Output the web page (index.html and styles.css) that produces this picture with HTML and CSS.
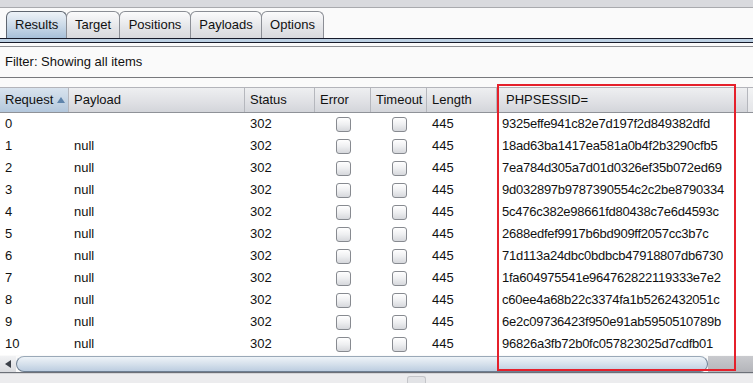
FILE: index.html
```html
<!DOCTYPE html>
<html>
<head>
<meta charset="utf-8">
<link rel="stylesheet" href="styles.css">
</head>
<body>
<div class="app">
  <div class="topbar"></div>
  <div class="tabs">
    <div class="tab tab-active">Results</div>
    <div class="tab">Target</div>
    <div class="tab">Positions</div>
    <div class="tab">Payloads</div>
    <div class="tab">Options</div>
  </div>
  <div class="tabline"></div>
  <div class="filter">Filter: Showing all items</div>
  <div class="table">
    <div class="thead">
      <div class="th th-sorted">Request<span class="sort"></span></div>
      <div class="th">Payload</div>
      <div class="th">Status</div>
      <div class="th">Error</div>
      <div class="th">Timeout</div>
      <div class="th">Length</div>
      <div class="th th-sess">PHPSESSID=</div>
      <div class="th th-last"></div>
    </div>
    <div class="tbody">
      <div class="tr"><div class="td">0</div><div class="td"></div><div class="td">302</div><div class="td tc"><span class="cb"></span></div><div class="td tc"><span class="cb"></span></div><div class="td">445</div><div class="td sess">9325effe941c82e7d197f2d849382dfd</div><div class="td"></div></div>
      <div class="tr"><div class="td">1</div><div class="td">null</div><div class="td">302</div><div class="td tc"><span class="cb"></span></div><div class="td tc"><span class="cb"></span></div><div class="td">445</div><div class="td sess">18ad63ba1417ea581a0b4f2b3290cfb5</div><div class="td"></div></div>
      <div class="tr"><div class="td">2</div><div class="td">null</div><div class="td">302</div><div class="td tc"><span class="cb"></span></div><div class="td tc"><span class="cb"></span></div><div class="td">445</div><div class="td sess">7ea784d305a7d01d0326ef35b072ed69</div><div class="td"></div></div>
      <div class="tr"><div class="td">3</div><div class="td">null</div><div class="td">302</div><div class="td tc"><span class="cb"></span></div><div class="td tc"><span class="cb"></span></div><div class="td">445</div><div class="td sess">9d032897b9787390554c2c2be8790334</div><div class="td"></div></div>
      <div class="tr"><div class="td">4</div><div class="td">null</div><div class="td">302</div><div class="td tc"><span class="cb"></span></div><div class="td tc"><span class="cb"></span></div><div class="td">445</div><div class="td sess">5c476c382e98661fd80438c7e6d4593c</div><div class="td"></div></div>
      <div class="tr"><div class="td">5</div><div class="td">null</div><div class="td">302</div><div class="td tc"><span class="cb"></span></div><div class="td tc"><span class="cb"></span></div><div class="td">445</div><div class="td sess">2688edfef9917b6bd909ff2057cc3b7c</div><div class="td"></div></div>
      <div class="tr"><div class="td">6</div><div class="td">null</div><div class="td">302</div><div class="td tc"><span class="cb"></span></div><div class="td tc"><span class="cb"></span></div><div class="td">445</div><div class="td sess">71d113a24dbc0bdbcb47918807db6730</div><div class="td"></div></div>
      <div class="tr"><div class="td">7</div><div class="td">null</div><div class="td">302</div><div class="td tc"><span class="cb"></span></div><div class="td tc"><span class="cb"></span></div><div class="td">445</div><div class="td sess">1fa604975541e964762822119333e7e2</div><div class="td"></div></div>
      <div class="tr"><div class="td">8</div><div class="td">null</div><div class="td">302</div><div class="td tc"><span class="cb"></span></div><div class="td tc"><span class="cb"></span></div><div class="td">445</div><div class="td sess">c60ee4a68b22c3374fa1b5262432051c</div><div class="td"></div></div>
      <div class="tr"><div class="td">9</div><div class="td">null</div><div class="td">302</div><div class="td tc"><span class="cb"></span></div><div class="td tc"><span class="cb"></span></div><div class="td">445</div><div class="td sess">6e2c09736423f950e91ab5950510789b</div><div class="td"></div></div>
      <div class="tr"><div class="td">10</div><div class="td">null</div><div class="td">302</div><div class="td tc"><span class="cb"></span></div><div class="td tc"><span class="cb"></span></div><div class="td">445</div><div class="td sess">96826a3fb72b0fc057823025d7cdfb01</div><div class="td"></div></div>
    </div>
    <div class="hscroll">
      <div class="sbtn"><span class="arrow"></span></div>
      <div class="thumb"></div>
      <div class="track"></div>
    </div>
    <div class="highlight"></div>
  </div>
  <div class="bottom"><span class="nub"></span></div>
</div>
</body>
</html>
```
FILE: styles.css
```css
html, body {
  margin: 0;
  padding: 0;
}
body {
  width: 753px;
  height: 383px;
  overflow: hidden;
  background: #fafafa;
  font-family: "Liberation Sans", Arial, sans-serif;
  font-size: 13px;
  color: #111;
}
.app {
  display: flex;
  flex-direction: column;
  height: 383px;
}
.topbar {
  height: 7px;
  background: #d9dade;
  border-bottom: 1px solid #a9aaae;
}
.tabs {
  display: flex;
  align-items: flex-end;
  height: 30px;
  padding-left: 6px;
  box-sizing: border-box;
}
.tab {
  height: 27px;
  box-sizing: border-box;
  padding: 0 8px;
  line-height: 25px;
  border: 1px solid #8b8e95;
  border-bottom: none;
  border-radius: 6px 6px 0 0;
  background: linear-gradient(#fbfbfc, #e4e5e8 60%, #d8d9dd);
  margin-right: -1px;
  text-align: center;
}
.tab:nth-child(2) { width: 54px; }
.tab:nth-child(3) { width: 72px; }
.tab:nth-child(4) { width: 72px; }
.tab:nth-child(5) { width: 63px; }
.tab-active {
  width: 61px;
  border-color: #5f6670;
  background: linear-gradient(#eef3f8, #c9d8e7 55%, #a7c0d9);
}
.tabline {
  height: 3px;
  border-top: 1px solid #161a2a;
  border-bottom: 1px solid #161a2a;
  background: #bcd0e3;
}
.filter {
  margin-top: 3px;
  border-top: 1px solid #8d8e92;
  border-bottom: 1px solid #77787c;
  height: 30px;
  line-height: 29px;
  padding-left: 5px;
}
.table {
  position: relative;
  margin-top: 9px;
}
.thead {
  display: grid;
  grid-template-columns: 69px 176px 70px 56px 56px 70px 251px 5px;
  height: 26px;
  box-sizing: border-box;
  border-top: 1px solid #b3b4ba;
  border-bottom: 1px solid #8f9298;
  background: linear-gradient(#eeeff1, #dfe0e4 60%, #d3d5da);
}
.th {
  border-right: 1px solid #b5b7bd;
  line-height: 24px;
  padding-left: 5px;
  white-space: nowrap;
  overflow: hidden;
}
.th-sorted {
  background: linear-gradient(#d8e3ee, #c3d3e3 60%, #b3c7dc);
}
.sort {
  display: inline-block;
  width: 0;
  height: 0;
  margin-left: 4px;
  vertical-align: 1px;
  border-left: 4px solid transparent;
  border-right: 4px solid transparent;
  border-bottom: 6px solid #5f84ab;
}
.th-sess { padding-left: 9px; }
.th-last { border-right: none; background: linear-gradient(#f3f4f5, #e4e5e8); }
.tbody {
  background: #fff;
}
.tr {
  display: grid;
  grid-template-columns: 69px 176px 70px 56px 56px 70px 251px 5px;
  height: 22px;
  line-height: 22px;
}
.td {
  padding-left: 5px;
  white-space: nowrap;
}
.sess {
  letter-spacing: -0.25px;
}
.tc {
  padding-left: 0;
  display: flex;
  align-items: center;
  justify-content: center;
}
.cb {
  width: 13px;
  height: 13px;
  border: 1px solid #878a90;
  border-radius: 3px;
  background: linear-gradient(#ffffff, #eeeff1 50%, #d6d8dc);
}
.hscroll {
  display: flex;
  height: 16px;
  margin-top: 1px;
  border-bottom: 1px solid #6c7078;
}
.sbtn {
  width: 16px;
  display: flex;
  align-items: center;
  justify-content: center;
  background: linear-gradient(#f1f2f4, #d9dbdf);
}
.arrow {
  width: 0;
  height: 0;
  border-top: 4px solid transparent;
  border-bottom: 4px solid transparent;
  border-right: 6px solid #3c4048;
}
.thumb {
  width: 692px;
  box-sizing: border-box;
  border: 1px solid #6e7f92;
  border-top-color: #9aa9b8;
  border-radius: 8px;
  background: linear-gradient(#eef3f8, #d6e1ec 50%, #bccde0);
}
.track {
  flex: 1;
  background: linear-gradient(#c9cace, #b4b5ba);
}
.highlight {
  position: absolute;
  left: 497px;
  top: -3px;
  width: 239px;
  height: 287px;
  border: 2px solid #e5202b;
  box-sizing: border-box;
  pointer-events: none;
}
.bottom {
  flex: 1;
  background: #ececee;
  border-top: 1px solid #d4d5d8;
  position: relative;
}
.nub {
  position: absolute;
  left: 407px;
  top: 2px;
  width: 17px;
  height: 6px;
  border: 1px solid #c4c5c9;
  border-bottom: none;
  border-radius: 3px 3px 0 0;
  background: #e2e3e6;
}
```
